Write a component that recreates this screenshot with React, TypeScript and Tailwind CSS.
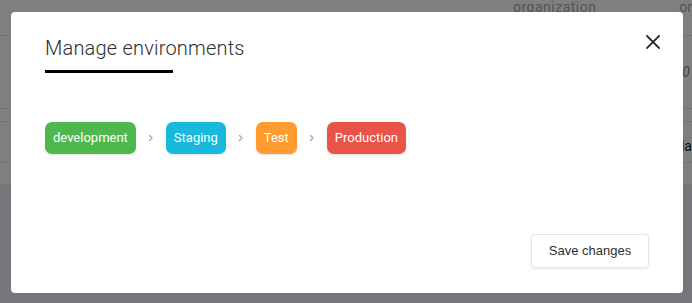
import React from "react";

const envs = [
  { name: "development", cls: "bg-[#4eb84f]" },
  { name: "Staging", cls: "bg-[#17b9dc]" },
  { name: "Test", cls: "bg-[#ff9b2f]" },
  { name: "Production", cls: "bg-[#e9534a]" },
];

function Chevron() {
  return (
    <svg width="8" height="10" viewBox="0 0 8 10" className="mx-[11px]">
      <path d="M2.5 2.5 L5 5 L2.5 7.5" fill="none" stroke="#a8a8a8" strokeWidth="1.4" strokeLinecap="round" strokeLinejoin="round" />
    </svg>
  );
}

export default function App() {
  return (
    <div className="relative w-[692px] h-[303px] overflow-hidden bg-[#ebecf3] font-['Roboto',sans-serif]">
      {/* page behind */}
      <div className="flex flex-col bg-white h-[184px]">
        <div className="h-[36px] border-b border-[#e6e6e6] flex items-start">
          <span className="ml-[513px] -mt-[3px] text-[14px] text-[#aaaaaa] tracking-[0.5px]">organization</span>
          <span className="ml-[auto] -mt-[3px] text-[14px] text-[#aaaaaa]">or</span>
        </div>
        <div className="h-[73px] border-b border-[#e6e6e6] flex items-center justify-end pr-[2px]">
          <span className="text-[14px] italic text-[#888]">0</span>
        </div>
        <div className="h-[13px] border-b border-[#e6e6e6]" />
        <div className="h-[41px] border-b border-[#e6e6e6] flex items-center justify-end">
          <span className="text-[14px] text-[#111] mt-[8px]">la</span>
        </div>
      </div>

      {/* overlay */}
      <div className="absolute inset-0 bg-black/50" />

      {/* modal */}
      <div className="absolute left-[11px] top-[12px] w-[672px] h-[281px] bg-white rounded-[4px] flex flex-col px-[34px]">
        <div className="flex items-start justify-between pt-[24px]">
          <div className="flex flex-col">
            <h2 className="text-[20px] leading-[24px] font-light text-[#2f2f2f] tracking-[0.2px]">Manage environments</h2>
            <div className="mt-[10px] w-[128px] h-[3px] bg-black" />
          </div>
          <button className="-mt-[1px] -mr-[11px] w-[14px] h-[14px] flex items-center justify-center">
            <svg width="14" height="14" viewBox="0 0 14 14">
              <path d="M1 1 L13 13 M13 1 L1 13" stroke="#2b2b2b" strokeWidth="1.8" strokeLinecap="square" />
            </svg>
          </button>
        </div>

        <div className="flex items-center mt-[49px]">
          {envs.map((e, i) => (
            <React.Fragment key={e.name}>
              {i > 0 && <Chevron />}
              <span className={`${e.cls} h-[32px] px-[8px] rounded-[7px] flex items-center text-white text-[13px] shadow-[0_1px_2px_rgba(0,0,0,0.12)]`}>
                {e.name}
              </span>
            </React.Fragment>
          ))}
        </div>

        <div className="flex-1" />
        <div className="flex justify-end pb-[25px]">
          <button className="h-[34px] w-[118px] rounded-[4px] border border-[#e4e4ee] bg-white text-[13px] text-[#2f2f2f] font-['Liberation_Sans',Arial,sans-serif] shadow-[0_1px_3px_rgba(0,0,0,0.1)]">
            Save changes
          </button>
        </div>
      </div>
    </div>
  );
}
